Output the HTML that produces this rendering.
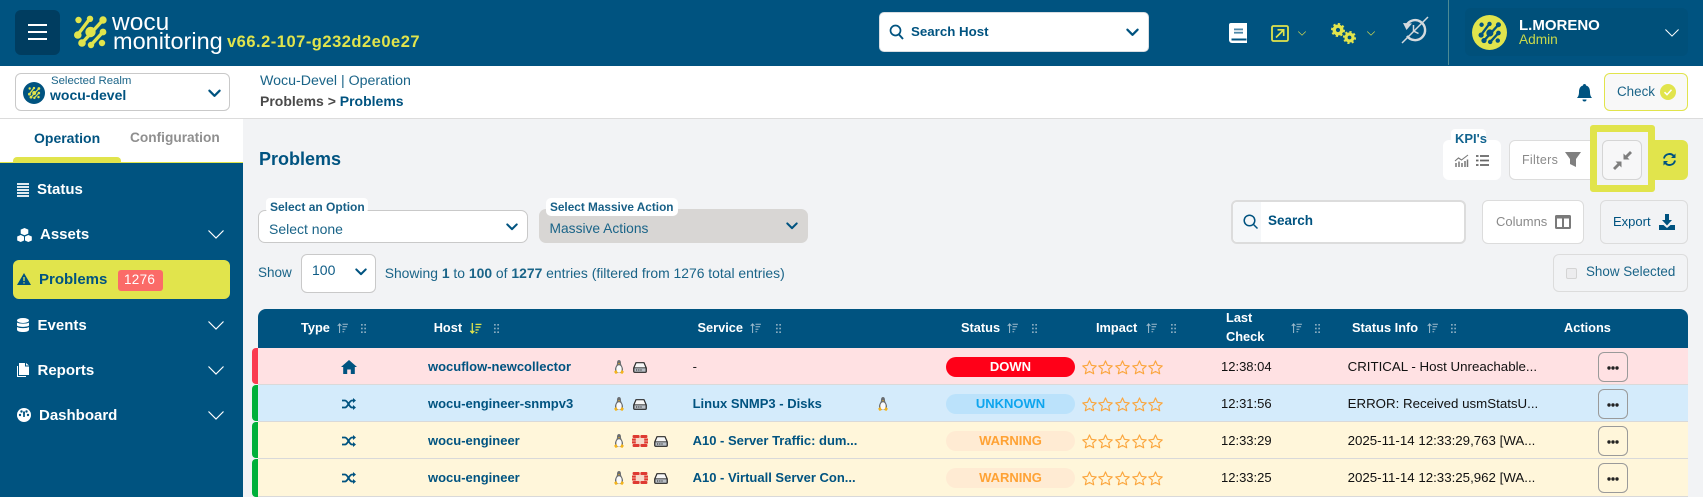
<!DOCTYPE html>
<html lang="en"><head><meta charset="utf-8"><title>Problems</title>
<style>
html,body{margin:0;padding:0}
body{width:1703px;height:497px;position:relative;overflow:hidden;background:#f2f3f5;font-family:"Liberation Sans",sans-serif;color:#005380}
.b{position:absolute;box-sizing:border-box}
.t{position:absolute;line-height:0;white-space:nowrap}
.w{font-weight:700}
svg{position:absolute;overflow:visible}
</style></head><body>
<svg width="0" height="0" style="position:absolute">
<defs>
<symbol id="chev" viewBox="0 0 14 9" overflow="visible"><path d="M1.5 1.5L7 7l5.500-5.500" fill="none" stroke="currentColor" stroke-width="2.400" stroke-linecap="round" stroke-linejoin="round"/></symbol>
<symbol id="chevt" viewBox="0 0 16 9" overflow="visible"><path d="M.5.5L8 8l7.500-7.500" fill="none" stroke="currentColor" stroke-width="1.200"/></symbol>
<symbol id="logo" viewBox="0 0 30 32" overflow="visible"><g stroke="currentColor" stroke-linecap="round" fill="none"><path d="M2.500 19L15 2.500" stroke-width="3.400"/><path d="M7 27L28 4" stroke-width="3.400"/><path d="M16 29L28 16" stroke-width="3.400"/></g><g fill="currentColor"><circle cx="3.500" cy="4" r="3.200"/><circle cx="27" cy="27" r="3.200"/><circle cx="2.800" cy="19" r="3.800"/><circle cx="15" cy="2.800" r="3.200"/><circle cx="7" cy="27" r="3.800"/><circle cx="28" cy="4" r="3.700"/><circle cx="15.500" cy="16" r="5.200"/><circle cx="16" cy="29" r="3.200"/><circle cx="28" cy="16" r="3.400"/></g></symbol>
<symbol id="sort" viewBox="0 0 13 12" overflow="visible"><g fill="none" stroke="currentColor" stroke-width="1.200"><path d="M3 12V1M.8 3.500L3 1l2.200 2.500"/><path d="M6.500 1.500H13M6.500 4.500H12M6.500 7.500H10M6.500 10.500H8.500"/></g></symbol>
<symbol id="dots" viewBox="0 0 6 11" overflow="visible"><g fill="currentColor"><rect width="2" height="2"/><rect x="4" width="2" height="2"/><rect y="4.500" width="2" height="2"/><rect x="4" y="4.500" width="2" height="2"/><rect y="9" width="2" height="2"/><rect x="4" y="9" width="2" height="2"/></g></symbol>
<symbol id="peng" viewBox="0 0 10 14" overflow="visible"><path d="M5 0C3.200 0 3 2 3 3.800 2.700 5.500 1 7 1 9.500c0 2 1.800 3.500 4 3.500s4-1.500 4-3.500C9 7 7.300 5.500 7 3.800 7 2 6.800 0 5 0z" fill="#6a6d70"/><ellipse cx="5" cy="9" rx="2.700" ry="3.700" fill="#fbfbfb"/><path d="M0 11.700l2.500-1.700 1.200 3-2 1zM10 11.700l-2.500-1.700-1.200 3 2 1zM4 3.300h2L5 4.500z" fill="#f4b41a"/></symbol>
<symbol id="drive" viewBox="0 0 14 11" overflow="visible"><path d="M3 .7h8L13.300 6v3.300a1 1 0 0 1-1 1H1.700a1 1 0 0 1-1-1V6z" fill="#f7f7f7" stroke="#2b2b2b" stroke-width="1.200"/><path d="M1 5.800h12v4.400H1z" fill="#b9bfc6" stroke="#2b2b2b" stroke-width=".8"/><path d="M3 8h6" stroke="#222" stroke-width="1" stroke-dasharray="1 .8"/></symbol>
<symbol id="red" viewBox="0 0 16 12" overflow="visible"><rect x="2" y="2" width="12" height="8" fill="#f6d9c9"/><g fill="#de3a32"><rect x="0" y="3.500" width="3.800" height="2.200"/><rect x="0" y="6.300" width="3.800" height="2.200"/><rect x="12.200" y="3.500" width="3.800" height="2.200"/><rect x="12.200" y="6.300" width="3.800" height="2.200"/><rect x=".6" y="0" width="7" height="3" rx="1"/><rect x="8.400" y="0" width="7" height="3" rx="1"/><rect x=".6" y="9" width="7" height="3" rx="1"/><rect x="8.400" y="9" width="7" height="3" rx="1"/></g></symbol>
<symbol id="star" viewBox="0 0 16 16" overflow="visible"><path d="M8 1l2.100 4.700 5.100.6-3.800 3.400 1.100 5L8 12.200l-4.500 2.500 1.100-5L.8 6.300l5.100-.6z" fill="none" stroke="#fba53c" stroke-width="1.200" stroke-linejoin="round"/></symbol>
<symbol id="shuf" viewBox="0 0 14 12" overflow="visible"><g fill="none" stroke="#005380" stroke-width="1.800"><path d="M0 2.500h3C6 2.500 7 9.500 10 9.500h2"/><path d="M0 9.500h3C6 9.500 7 2.500 10 2.500h2"/></g><path d="M11 0l3 2.500-3 2.500zM11 7l3 2.500-3 2.500z" fill="#005380"/></symbol>
<symbol id="dotsh" viewBox="0 0 12 4" overflow="visible"><circle cx="2" cy="2" r="1.700" fill="#222"/><circle cx="6" cy="2" r="1.700" fill="#222"/><circle cx="10" cy="2" r="1.700" fill="#222"/></symbol>
</defs></svg>

<!-- top bar -->
<div class="b" style="left:0;top:0;width:1703px;height:66px;background:#005380"></div>
<div class="b" style="left:15px;top:10px;width:45px;height:45px;background:#003d60;border-radius:6px"></div>
<div class="b" style="left:28px;top:24px;width:19px;height:2px;background:#fff"></div>
<div class="b" style="left:28px;top:31px;width:19px;height:2px;background:#fff"></div>
<div class="b" style="left:28px;top:38px;width:19px;height:2px;background:#fff"></div>
<svg style="left:75px;top:16px;color:#e1e44c" width="30" height="32"><use href="#logo"/></svg>
<div class="t" style="left:112px;top:23px;font-size:24.500px;color:#fff">wocu</div>
<div class="t" style="left:113px;top:41px;font-size:23.500px;color:#fff">monitoring</div>
<div class="t w" style="left:227px;top:42px;font-size:16.500px;letter-spacing:.5px;color:#e1e44c">v66.2-107-g232d2e0e27</div>

<div class="b" style="left:879px;top:12px;width:270px;height:40px;background:#fff;border-radius:5px;border:1px solid #d8dde2"></div>
<svg style="left:889px;top:24px" width="16" height="16" viewBox="0 0 16 16"><circle cx="6.500" cy="6.500" r="5" fill="none" stroke="#005380" stroke-width="1.700"/><path d="M10 10.500l4 4.500" stroke="#005380" stroke-width="1.900"/></svg>
<div class="t w" style="left:911px;top:32px;font-size:13.300px">Search Host</div>
<svg style="left:1126px;top:28px;color:#005380" width="13" height="9"><use href="#chev"/></svg>

<svg style="left:1229px;top:23px" width="18" height="20" viewBox="0 0 18 20"><path d="M2 0h16v20H3a3 3 0 0 1-3-3V2a2 2 0 0 1 2-2z" fill="#fff"/><rect x="5" y="5.500" width="9" height="1.800" fill="#4d87a8"/><rect x="5" y="8.800" width="9" height="1.800" fill="#4d87a8"/><rect x="2.500" y="15.500" width="15" height="2" fill="#005380"/></svg>
<svg style="left:1271px;top:25px" width="18" height="17" viewBox="0 0 18 17"><rect x="1" y="1" width="16" height="15" rx="1.500" fill="none" stroke="#e1e44c" stroke-width="1.800"/><path d="M5 12.500L12 5.500M6.500 4.800H12.700V11" fill="none" stroke="#e1e44c" stroke-width="1.600"/></svg>
<svg style="left:1298px;top:31px;color:#e1e44c" width="8" height="5"><use href="#chevt"/></svg>
<svg style="left:1331px;top:23px" width="25" height="21" viewBox="0 0 25 21"><g fill="none" stroke="#e1e44c"><circle cx="7" cy="7" r="3.800" stroke-width="3.400"/><circle cx="7" cy="7" r="5.800" stroke-width="2.400" stroke-dasharray="2.200 2.300"/><circle cx="18.500" cy="14.500" r="3.500" stroke-width="3.200"/><circle cx="18.500" cy="14.500" r="5.400" stroke-width="2.300" stroke-dasharray="2.100 2.100"/></g></svg>
<svg style="left:1367px;top:31px;color:#e1e44c" width="8" height="5"><use href="#chevt"/></svg>
<svg style="left:1401px;top:16px" width="28" height="28" viewBox="0 0 28 28"><g fill="none" stroke="#d4dade" stroke-width="2.400"><path d="M5 10a10 10 0 1 1 1 10"/><path d="M12.500 9v6l5 2.500" stroke-width="1.500"/></g><path d="M2 7l9 .500-5.500 6.500z" fill="#d4dade"/><path d="M1 27L27 1" stroke="#d4dade" stroke-width="1.500"/></svg>
<div class="b" style="left:1448px;top:0;width:1px;height:65px;background:#4d8a94"></div>
<div class="b" style="left:1465px;top:8px;width:223px;height:48px;background:#00507a;border-radius:6px"></div>
<div class="b" style="left:1472px;top:15px;width:35px;height:35px;background:#e1e44c;border-radius:50%"></div>
<svg style="left:1479px;top:22px;color:#005380" width="21" height="22" viewBox="0 0 30 32"><use href="#logo" width="30" height="32"/></svg>
<div class="t w" style="left:1519px;top:26px;font-size:15px;color:#fff">L.MORENO</div>
<div class="t" style="left:1519px;top:40px;font-size:13.700px;color:#c9d94b">Admin</div>
<svg style="left:1665px;top:29px;color:#fff" width="14" height="8"><use href="#chevt"/></svg>

<!-- second bar -->
<div class="b" style="left:0;top:66px;width:1703px;height:53px;background:#fff;border-bottom:1px solid #dcdcdc"></div>
<div class="b" style="left:15px;top:73px;width:215px;height:38px;background:#fff;border:1px solid #c9c9c9;border-radius:6px"></div>
<div class="b" style="left:23px;top:82px;width:22px;height:22px;background:#005380;border-radius:50%"></div>
<svg style="left:28px;top:87px;color:#e1e44c" width="12" height="12" viewBox="0 0 30 32"><use href="#logo" width="30" height="32"/></svg>
<div class="t" style="left:51px;top:81px;font-size:11.400px;color:#1a6488">Selected Realm</div>
<div class="t w" style="left:50px;top:95px;font-size:14px">wocu-devel</div>
<svg style="left:208px;top:89px;color:#005380" width="13" height="9"><use href="#chev"/></svg>
<div class="t" style="left:260px;top:81px;font-size:14.200px;color:#1a6488">Wocu-Devel | Operation</div>
<div class="t w" style="left:260px;top:101px;font-size:14px"><span style="color:#4a4a4a">Problems &gt;</span> Problems</div>
<svg style="left:1577px;top:84px" width="15" height="18" viewBox="0 0 15 18"><path d="M7.500 0a1.500 1.500 0 0 1 1.500 1.500C12 2.300 13 5 13 8c0 3 .800 4.500 2 6H0c1.200-1.500 2-3 2-6 0-3 1-5.700 4-6.500A1.500 1.500 0 0 1 7.500 0z" fill="#005380"/><path d="M5.500 15.500h4a2 2 0 0 1-4 0z" fill="#005380"/></svg>
<div class="b" style="left:1604px;top:73px;width:84px;height:38px;background:#f8f8f8;border:1px solid #e1e44c;border-radius:6px"></div>
<div class="t" style="left:1617px;top:92px;font-size:13.400px;color:#1a6488">Check</div>
<svg style="left:1660px;top:84px" width="16" height="16" viewBox="0 0 16 16"><circle cx="8" cy="8" r="8" fill="#e1e44c"/><path d="M4.500 8.200l2.500 2.500 4.500-5" fill="none" stroke="#fff" stroke-width="1.500"/></svg>

<!-- sidebar -->
<div class="b" style="left:0;top:119px;width:243px;height:44px;background:#fff"></div>
<div class="t w" style="left:34px;top:138px;font-size:14px">Operation</div>
<div class="t w" style="left:130px;top:138px;font-size:13.700px;color:#8f8f8f">Configuration</div>
<div class="b" style="left:13px;top:157px;width:108px;height:6px;background:#e1e44c;border-radius:4px 4px 0 0"></div>
<div class="b" style="left:0;top:162px;width:243px;height:335px;background:#005380;border-top:1px solid #e1e44c"></div>
<svg style="left:17px;top:183px" width="12" height="14"><path d="M0 1h12M0 4h12M0 7h12M0 10h12M0 13h12" stroke="#fff" stroke-width="1.700"/></svg>
<div class="t w" style="left:37px;top:190px;font-size:15px;color:#fff">Status</div>
<svg style="left:17px;top:228px" width="15" height="14" viewBox="0 0 15 14"><g fill="#fff"><path d="M7.500 0l3.800 1.600v4L7.500 7.200 3.700 5.600v-4z"/><path d="M3.700 7L7 8.500v4L3.700 14 .2 12.500v-4z"/><path d="M11.300 7l3.500 1.500v4L11.300 14 8 12.500v-4z"/></g></svg>
<div class="t w" style="left:40px;top:235px;font-size:15px;color:#fff">Assets</div>
<svg style="left:208px;top:230px;color:#fff" width="16" height="9"><use href="#chevt"/></svg>
<div class="b" style="left:13px;top:260px;width:217px;height:39px;background:#e1e44c;border-radius:6px"></div>
<svg style="left:17px;top:273px" width="14" height="12" viewBox="0 0 14 12"><path d="M7 0l7 12H0z" fill="#005380"/><path d="M7 4v4M7 9.200v1.300" stroke="#e1e44c" stroke-width="1.300"/></svg>
<div class="t w" style="left:39px;top:280px;font-size:15px">Problems</div>
<div class="b" style="left:118px;top:270px;width:45px;height:21px;background:#fb6b68;border-radius:3px"></div>
<div class="t" style="left:124px;top:280px;font-size:13.500px;color:#fff;letter-spacing:.3px">1276</div>
<svg style="left:17px;top:318px" width="12" height="14" viewBox="0 0 12 14"><g fill="#fff"><ellipse cx="6" cy="2.500" rx="6" ry="2.500"/><path d="M0 4.500c1.500 1.500 10.500 1.500 12 0v3c-1.500 1.800-10.500 1.800-12 0z"/><path d="M0 9c1.500 1.500 10.500 1.500 12 0v2.500C12 13.500 9 14 6 14s-6-.5-6-2.500z"/></g></svg>
<div class="t w" style="left:37.500px;top:326px;font-size:15px;color:#fff">Events</div>
<svg style="left:208px;top:321px;color:#fff" width="16" height="9"><use href="#chevt"/></svg>
<svg style="left:17px;top:363px" width="12" height="14" viewBox="0 0 12 14"><path d="M2 0h6v3.500h4V12H2z" fill="#fff"/><path d="M9 0l3 2.500H9zM0 3h1v10h8v1H0z" fill="#fff"/></svg>
<div class="t w" style="left:37.500px;top:371px;font-size:15px;color:#fff">Reports</div>
<svg style="left:208px;top:366px;color:#fff" width="16" height="9"><use href="#chevt"/></svg>
<svg style="left:17px;top:408px" width="14" height="14" viewBox="0 0 14 14"><circle cx="7" cy="7" r="7" fill="#fff"/><g fill="#005380"><circle cx="3" cy="7" r="1.200"/><circle cx="4.500" cy="3.500" r="1.200"/><circle cx="9.500" cy="3.500" r="1.200"/><circle cx="11" cy="7" r="1.200"/><path d="M6 3.500h2L7.800 9H6.200z"/></g></svg>
<div class="t w" style="left:39px;top:416px;font-size:15px;color:#fff">Dashboard</div>
<svg style="left:208px;top:411px;color:#fff" width="16" height="9"><use href="#chevt"/></svg>

<!-- main toolbar -->
<div class="t w" style="left:259px;top:159px;font-size:18px">Problems</div>
<div class="b" style="left:1443px;top:140px;width:58px;height:40px;background:#fff;border-radius:6px"></div>
<div class="b" style="left:1451px;top:129px;width:35px;height:14px;background:#fff;border-radius:4px"></div>
<div class="t w" style="left:1455px;top:139px;font-size:13px;color:#12648f">KPI's</div>
<svg style="left:1455px;top:155px" width="13" height="12" viewBox="0 0 13 12"><path d="M0 6l3.500-3 3 2L13 0" fill="none" stroke="#777" stroke-width="1.100"/><path d="M1 8v4M4 6.500V12M7 8v4M10 6v6M12.500 4.500V12" stroke="#777" stroke-width="1.500"/></svg>
<svg style="left:1476px;top:155px" width="13" height="11"><path d="M0 1h2.500M4 1h9M0 5.500h2.500M4 5.500h9M0 10h2.500M4 10h9" stroke="#666" stroke-width="1.700"/></svg>
<div class="b" style="left:1509px;top:140px;width:90px;height:40px;background:#fff;border:1px solid #dcdcdc;border-radius:6px"></div>
<div class="t" style="left:1522px;top:160px;font-size:12.500px;letter-spacing:.3px;color:#8a8a8a">Filters</div>
<svg style="left:1565px;top:152px" width="16" height="15" viewBox="0 0 16 15"><path d="M0 0h16l-5 7v8l-6-3V7z" fill="#808080"/></svg>
<div class="b" style="left:1655px;top:140px;width:33px;height:40px;background:#e1e44c;border-radius:0 6px 6px 0"></div>
<div class="b" style="left:1590px;top:125px;width:65px;height:67px;background:#f2f3f5;border:7px solid #e1e44c;border-radius:3px"></div>
<div class="b" style="left:1602px;top:140px;width:40px;height:40px;background:#f7f7f8;border:1px solid #d5d5d5;border-radius:6px"></div>
<svg style="left:1613px;top:151px" width="19" height="19" viewBox="0 0 19 19"><g fill="#7e7e7e"><path d="M10.500 8.500V2.500l2 2L17 0l2 2-4.500 4.500 2 2zM8.500 10.500v6l-2-2L2 19l-2-2 4.500-4.500-2-2z"/></g></svg>
<svg style="left:1663px;top:153px" width="13" height="13" viewBox="0 0 13 13"><g fill="none" stroke="#005380" stroke-width="1.900"><path d="M1 5.500A5.500 5.500 0 0 1 11 3.500"/><path d="M12 7.500A5.500 5.500 0 0 1 2 9.500"/></g><path d="M12.500 .5v4.500H8zM.5 12.500V8H5z" fill="#005380"/></svg>

<div class="b" style="left:1231px;top:200px;width:235px;height:44px;background:#fff;border:2px solid #dcdcdc;border-radius:6px"></div>
<div class="b" style="left:1233px;top:202px;width:28px;height:40px;background:#f5f7f9;border-radius:5px 0 0 5px"></div>
<svg style="left:1243px;top:214px" width="15" height="15" viewBox="0 0 15 15"><circle cx="6.500" cy="6.500" r="5.300" fill="none" stroke="#005380" stroke-width="1.500"/><path d="M10.500 10.500L14.500 14.500" stroke="#005380" stroke-width="1.500"/></svg>
<div class="t w" style="left:1268px;top:221px;font-size:13.500px">Search</div>
<div class="b" style="left:1482px;top:200px;width:102px;height:44px;background:#fff;border:1px solid #dcdcdc;border-radius:6px"></div>
<div class="t" style="left:1496px;top:222px;font-size:13px;color:#8a8a8a">Columns</div>
<svg style="left:1555px;top:215px" width="16" height="14"><rect width="16" height="14" rx="1.500" fill="#7a7a7a"/><rect x="2" y="3.500" width="5" height="8.500" fill="#fff"/><rect x="9" y="3.500" width="5" height="8.500" fill="#fff"/></svg>
<div class="b" style="left:1600px;top:200px;width:88px;height:44px;border:1px solid #dcdcdc;border-radius:6px"></div>
<div class="t" style="left:1613px;top:222px;font-size:13px">Export</div>
<svg style="left:1659px;top:214px" width="16" height="16" viewBox="0 0 16 16"><path d="M6 0h4v6h3L8 11.500 3 6h3z" fill="#005380"/><path d="M0 11h4.500L8 14l3.500-3H16v5H0z" fill="#005380"/></svg>
<div class="b" style="left:1553px;top:254px;width:135px;height:38px;border:1px solid #dcdcdc;border-radius:6px"></div>
<div class="b" style="left:1566px;top:268px;width:11px;height:11px;background:#ececee;border:1px solid #d4d4d4;border-radius:2px"></div>
<div class="t" style="left:1586px;top:272px;font-size:13.400px;color:#1a6488">Show Selected</div>

<div class="b" style="left:258px;top:210px;width:269.500px;height:33px;background:#fff;border:1px solid #c9c9c9;border-radius:7px"></div>
<div class="b" style="left:266px;top:198px;width:102px;height:15px;background:#fff;border-radius:4px"></div>
<div class="t w" style="left:270px;top:207px;font-size:12px;color:#175f86">Select an Option</div>
<div class="t" style="left:269px;top:229px;font-size:14px;color:#1a6488">Select none</div>
<svg style="left:506px;top:223px;color:#005380" width="12" height="8"><use href="#chev"/></svg>
<div class="b" style="left:538.500px;top:209px;width:269px;height:34px;background:#d8d6d4;border-radius:7px"></div>
<div class="b" style="left:546px;top:198px;width:132px;height:18px;background:#fff;border-radius:5px"></div>
<div class="t w" style="left:550px;top:207px;font-size:11.800px;color:#175f86">Select Massive Action</div>
<div class="t" style="left:549.500px;top:229px;font-size:13.800px;color:#1a6488">Massive Actions</div>
<svg style="left:786px;top:222px;color:#005380" width="12" height="8"><use href="#chev"/></svg>

<div class="t" style="left:258px;top:273px;font-size:13.500px;color:#1a6488">Show</div>
<div class="b" style="left:300.500px;top:254px;width:75.500px;height:39px;background:#fff;border:1px solid #c9c9c9;border-radius:6px"></div>
<div class="t" style="left:312px;top:270px;font-size:14px;color:#0e5c86">100</div>
<svg style="left:355px;top:268px;color:#005380" width="12" height="8"><use href="#chev"/></svg>
<div class="t" style="left:384.700px;top:273px;font-size:13.900px;color:#1a6488">Showing <b>1</b> to <b>100</b> of <b>1277</b> entries (filtered from 1276 total entries)</div>

<!-- table header -->
<div class="b" style="left:258px;top:309px;width:1430px;height:39px;background:#005380;border-radius:8px 8px 0 0"></div>
<div class="t w" style="left:301px;top:328px;font-size:12.800px;color:#fff">Type</div>
<svg style="left:337px;top:323px;color:#9fbccd" width="11" height="10"><use href="#sort"/></svg>
<svg style="left:361px;top:324px;color:#8fb0c3" width="5" height="9"><use href="#dots"/></svg>
<div class="t w" style="left:433.700px;top:328px;font-size:12.800px;color:#fff">Host</div>
<svg style="left:469px;top:323px;color:#e1e44c" width="13" height="11" viewBox="0 0 13 12"><g fill="none" stroke="#e1e44c" stroke-width="1.400"><path d="M3 0v11M.8 8.500L3 11l2.200-2.500"/><path d="M6.500 1.500H13M6.500 4.500H12M6.500 7.500H10M6.500 10.500H8.500"/></g></svg>
<svg style="left:494px;top:324px;color:#8fb0c3" width="5" height="9"><use href="#dots"/></svg>
<div class="t w" style="left:697.500px;top:328px;font-size:12.800px;color:#fff">Service</div>
<svg style="left:750px;top:323px;color:#9fbccd" width="11" height="10"><use href="#sort"/></svg>
<svg style="left:776px;top:324px;color:#8fb0c3" width="5" height="9"><use href="#dots"/></svg>
<div class="t w" style="left:961px;top:328px;font-size:12.800px;color:#fff">Status</div>
<svg style="left:1007px;top:323px;color:#9fbccd" width="11" height="10"><use href="#sort"/></svg>
<svg style="left:1032px;top:324px;color:#8fb0c3" width="5" height="9"><use href="#dots"/></svg>
<div class="t w" style="left:1096px;top:328px;font-size:12.800px;color:#fff">Impact</div>
<svg style="left:1146px;top:323px;color:#9fbccd" width="11" height="10"><use href="#sort"/></svg>
<svg style="left:1171px;top:324px;color:#8fb0c3" width="5" height="9"><use href="#dots"/></svg>
<div class="t w" style="left:1226px;top:318px;font-size:12.800px;color:#fff">Last</div>
<div class="t w" style="left:1226px;top:337px;font-size:12.800px;color:#fff">Check</div>
<svg style="left:1291px;top:323px;color:#9fbccd" width="11" height="10"><use href="#sort"/></svg>
<svg style="left:1315px;top:324px;color:#8fb0c3" width="5" height="9"><use href="#dots"/></svg>
<div class="t w" style="left:1352px;top:328px;font-size:12.800px;color:#fff">Status Info</div>
<svg style="left:1427px;top:323px;color:#9fbccd" width="11" height="10"><use href="#sort"/></svg>
<svg style="left:1451px;top:324px;color:#8fb0c3" width="5" height="9"><use href="#dots"/></svg>
<div class="t w" style="left:1564px;top:328px;font-size:12.800px;color:#fff">Actions</div>

<!-- row 1 -->
<div class="b" style="left:258px;top:348px;width:1430px;height:37px;background:#ffe1e3;border-bottom:1px solid #d9d9d9"></div>
<div class="b" style="left:252px;top:348px;width:6px;height:36px;background:#fa3b50;border-radius:4px 0 0 4px"></div>
<svg style="left:341px;top:360px" width="16" height="14" viewBox="0 0 16 14"><path d="M8 0l8 7h-2.200v7H9.800V9.500H6.200V14H2.200V7H0z" fill="#005380"/></svg>
<div class="t w" style="left:428px;top:367px;font-size:13px">wocuflow-newcollector</div>
<svg style="left:614px;top:360px" width="10" height="14"><use href="#peng"/></svg>
<svg style="left:633px;top:361.500px" width="14" height="11"><use href="#drive"/></svg>
<div class="t" style="left:692.600px;top:367px;font-size:13px;color:#222">-</div>
<div class="b" style="left:946px;top:357px;width:129px;height:20px;background:#ff0018;border-radius:10px"></div>
<div class="t w" style="left:946px;width:129px;text-align:center;top:367px;font-size:13px;color:#fff">DOWN</div>
<svg style="left:1081.500px;top:359.500px" width="15" height="15"><use href="#star"/></svg><svg style="left:1098.200px;top:359.500px" width="15" height="15"><use href="#star"/></svg><svg style="left:1114.900px;top:359.500px" width="15" height="15"><use href="#star"/></svg><svg style="left:1131.600px;top:359.500px" width="15" height="15"><use href="#star"/></svg><svg style="left:1148.300px;top:359.500px" width="15" height="15"><use href="#star"/></svg>
<div class="t" style="left:1221px;top:367px;font-size:13px;color:#111">12:38:04</div>
<div class="t" style="left:1347.600px;top:367px;font-size:13.300px;color:#111">CRITICAL - Host Unreachable...</div>
<div class="b" style="left:1598px;top:352px;width:30px;height:30px;border:1px solid #9a9a9a;border-radius:6px"></div>
<svg style="left:1607px;top:365.500px" width="12" height="4"><use href="#dotsh"/></svg>

<!-- row 2 -->
<div class="b" style="left:258px;top:385px;width:1430px;height:37px;background:#d4ebfb;border-bottom:1px solid #d9d9d9"></div>
<div class="b" style="left:252px;top:385px;width:6px;height:36px;background:#00b03a;border-radius:4px 0 0 4px"></div>
<svg style="left:342px;top:398px" width="14" height="12"><use href="#shuf"/></svg>
<div class="t w" style="left:428px;top:404px;font-size:13px">wocu-engineer-snmpv3</div>
<svg style="left:614px;top:397px" width="10" height="14"><use href="#peng"/></svg>
<svg style="left:633px;top:398.500px" width="14" height="11"><use href="#drive"/></svg>
<div class="t w" style="left:692.600px;top:404px;font-size:13px">Linux SNMP3 - Disks</div>
<svg style="left:878px;top:397px" width="10" height="14"><use href="#peng"/></svg>
<div class="b" style="left:946px;top:394px;width:129px;height:20px;background:#bbe2fb;border-radius:10px"></div>
<div class="t w" style="left:946px;width:129px;text-align:center;top:404px;font-size:13px;color:#0ea5ee">UNKNOWN</div>
<svg style="left:1081.500px;top:396.500px" width="15" height="15"><use href="#star"/></svg><svg style="left:1098.200px;top:396.500px" width="15" height="15"><use href="#star"/></svg><svg style="left:1114.900px;top:396.500px" width="15" height="15"><use href="#star"/></svg><svg style="left:1131.600px;top:396.500px" width="15" height="15"><use href="#star"/></svg><svg style="left:1148.300px;top:396.500px" width="15" height="15"><use href="#star"/></svg>
<div class="t" style="left:1221px;top:404px;font-size:13px;color:#111">12:31:56</div>
<div class="t" style="left:1347.600px;top:404px;font-size:13.300px;color:#111">ERROR: Received usmStatsU...</div>
<div class="b" style="left:1598px;top:389px;width:30px;height:30px;border:1px solid #9a9a9a;border-radius:6px"></div>
<svg style="left:1607px;top:402.500px" width="12" height="4"><use href="#dotsh"/></svg>

<!-- row 3 -->
<div class="b" style="left:258px;top:422px;width:1430px;height:37px;background:#fff6da;border-bottom:1px solid #d9d9d9"></div>
<div class="b" style="left:252px;top:422px;width:6px;height:36px;background:#00b03a;border-radius:4px 0 0 4px"></div>
<svg style="left:342px;top:435px" width="14" height="12"><use href="#shuf"/></svg>
<div class="t w" style="left:428px;top:441px;font-size:13px">wocu-engineer</div>
<svg style="left:614px;top:434px" width="10" height="14"><use href="#peng"/></svg>
<svg style="left:632px;top:435px" width="16" height="12"><use href="#red"/></svg>
<svg style="left:654px;top:435.500px" width="14" height="11"><use href="#drive"/></svg>
<div class="t w" style="left:692.600px;top:441px;font-size:13px">A10 - Server Traffic: dum...</div>
<div class="b" style="left:946px;top:431px;width:129px;height:20px;background:#ffebd3;border-radius:10px"></div>
<div class="t w" style="left:946px;width:129px;text-align:center;top:441px;font-size:13px;color:#ffa234">WARNING</div>
<svg style="left:1081.500px;top:433.500px" width="15" height="15"><use href="#star"/></svg><svg style="left:1098.200px;top:433.500px" width="15" height="15"><use href="#star"/></svg><svg style="left:1114.900px;top:433.500px" width="15" height="15"><use href="#star"/></svg><svg style="left:1131.600px;top:433.500px" width="15" height="15"><use href="#star"/></svg><svg style="left:1148.300px;top:433.500px" width="15" height="15"><use href="#star"/></svg>
<div class="t" style="left:1221px;top:441px;font-size:13px;color:#111">12:33:29</div>
<div class="t" style="left:1347.600px;top:441px;font-size:13.300px;color:#111">2025-11-14 12:33:29,763 [WA...</div>
<div class="b" style="left:1598px;top:426px;width:30px;height:30px;border:1px solid #9a9a9a;border-radius:6px"></div>
<svg style="left:1607px;top:439.500px" width="12" height="4"><use href="#dotsh"/></svg>

<!-- row 4 -->
<div class="b" style="left:258px;top:459px;width:1430px;height:38px;background:#fff6da;border-bottom:1px solid #d9d9d9"></div>
<div class="b" style="left:252px;top:459px;width:6px;height:38px;background:#00b03a;border-radius:4px 0 0 4px"></div>
<svg style="left:342px;top:472px" width="14" height="12"><use href="#shuf"/></svg>
<div class="t w" style="left:428px;top:478px;font-size:13px">wocu-engineer</div>
<svg style="left:614px;top:471px" width="10" height="14"><use href="#peng"/></svg>
<svg style="left:632px;top:472px" width="16" height="12"><use href="#red"/></svg>
<svg style="left:654px;top:472.500px" width="14" height="11"><use href="#drive"/></svg>
<div class="t w" style="left:692.600px;top:478px;font-size:13px">A10 - Virtuall Server Con...</div>
<div class="b" style="left:946px;top:468px;width:129px;height:20px;background:#ffebd3;border-radius:10px"></div>
<div class="t w" style="left:946px;width:129px;text-align:center;top:478px;font-size:13px;color:#ffa234">WARNING</div>
<svg style="left:1081.500px;top:470.500px" width="15" height="15"><use href="#star"/></svg><svg style="left:1098.200px;top:470.500px" width="15" height="15"><use href="#star"/></svg><svg style="left:1114.900px;top:470.500px" width="15" height="15"><use href="#star"/></svg><svg style="left:1131.600px;top:470.500px" width="15" height="15"><use href="#star"/></svg><svg style="left:1148.300px;top:470.500px" width="15" height="15"><use href="#star"/></svg>
<div class="t" style="left:1221px;top:478px;font-size:13px;color:#111">12:33:25</div>
<div class="t" style="left:1347.600px;top:478px;font-size:13.300px;color:#111">2025-11-14 12:33:25,962 [WA...</div>
<div class="b" style="left:1598px;top:463px;width:30px;height:30px;border:1px solid #9a9a9a;border-radius:6px"></div>
<svg style="left:1607px;top:476.500px" width="12" height="4"><use href="#dotsh"/></svg>
</body></html>
